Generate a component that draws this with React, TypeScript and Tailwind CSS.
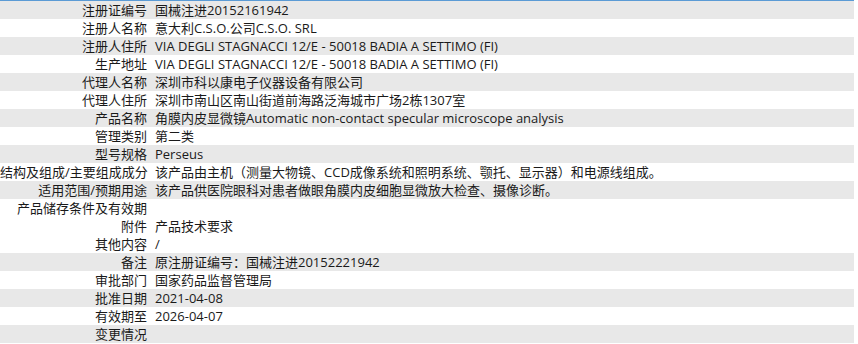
import React from "react";

const rows: { label: string; value: string; gray: boolean }[] = [
  { label: "注册证编号", value: "国械注进20152161942", gray: true },
  { label: "注册人名称", value: "意大利C.S.O.公司C.S.O. SRL", gray: false },
  { label: "注册人住所", value: "VIA DEGLI STAGNACCI 12/E - 50018 BADIA A SETTIMO (FI)", gray: true },
  { label: "生产地址", value: "VIA DEGLI STAGNACCI 12/E - 50018 BADIA A SETTIMO (FI)", gray: false },
  { label: "代理人名称", value: "深圳市科以康电子仪器设备有限公司", gray: true },
  { label: "代理人住所", value: "深圳市南山区南山街道前海路泛海城市广场2栋1307室", gray: false },
  { label: "产品名称", value: "角膜内皮显微镜Automatic non-contact specular microscope analysis", gray: true },
  { label: "管理类别", value: "第二类", gray: false },
  { label: "型号规格", value: "Perseus", gray: true },
  { label: "结构及组成/主要组成成分", value: "该产品由主机（测量大物镜、CCD成像系统和照明系统、颚托、显示器）和电源线组成。", gray: false },
  { label: "适用范围/预期用途", value: "该产品供医院眼科对患者做眼角膜内皮细胞显微放大检查、摄像诊断。", gray: true },
  { label: "产品储存条件及有效期", value: "", gray: false },
  { label: "附件", value: "产品技术要求", gray: false },
  { label: "其他内容", value: "/", gray: false },
  { label: "备注", value: "原注册证编号：国械注进20152221942", gray: true },
  { label: "审批部门", value: "国家药品监督管理局", gray: false },
  { label: "批准日期", value: "2021-04-08", gray: true },
  { label: "有效期至", value: "2026-04-07", gray: false },
  { label: "变更情况", value: "", gray: true },
];

export default function App() {
  return (
    <div
      className="w-[858px] h-[344px] bg-white overflow-hidden text-[13px] text-[#1a1a1a]"
      style={{ fontFamily: '"Open Sans", "Noto Sans CJK SC", sans-serif' }}
    >
      <div className="w-[854px] border-t border-[#5b9bd5]">
        {rows.map((r, i) => (
          <div
            key={i}
            className={`flex h-[18px] items-center leading-[18px] whitespace-nowrap ${r.gray ? "bg-[#e8e8e8]" : "bg-white"}`}
          >
            <div className="w-[147px] shrink-0 text-right">{r.label}</div>
            <div className="pl-[8px]">{r.value}</div>
          </div>
        ))}
      </div>
    </div>
  );
}
